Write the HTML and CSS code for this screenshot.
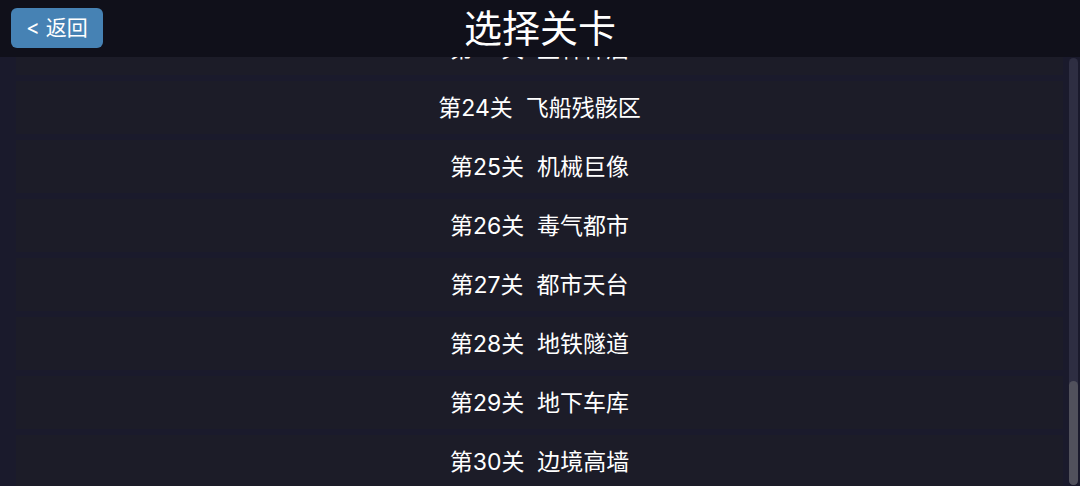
FILE: index.html
```html
<!DOCTYPE html>
<html lang="zh-CN">
<head>
<meta charset="utf-8">
<meta name="viewport" content="width=device-width, initial-scale=1">
<title>选择关卡</title>
<link rel="stylesheet" href="styles.css">
</head>
<body>
<header class="topbar">
  <button class="back" type="button">&lt; 返回</button>
  <h1 class="title">选择关卡</h1>
</header>
<main class="viewport">
  <div class="levels">
    <button class="level" type="button">第23关&nbsp;&nbsp;丛林神庙</button>
    <button class="level" type="button">第24关&nbsp;&nbsp;飞船残骸区</button>
    <button class="level" type="button">第25关&nbsp;&nbsp;机械巨像</button>
    <button class="level" type="button">第26关&nbsp;&nbsp;毒气都市</button>
    <button class="level" type="button">第27关&nbsp;&nbsp;都市天台</button>
    <button class="level" type="button">第28关&nbsp;&nbsp;地铁隧道</button>
    <button class="level" type="button">第29关&nbsp;&nbsp;地下车库</button>
    <button class="level" type="button">第30关&nbsp;&nbsp;边境高墙</button>
  </div>
  <div class="track"><div class="thumb"></div></div>
</main>
</body>
</html>
```
FILE: styles.css
```css
* { box-sizing: border-box; }

body {
  margin: 0;
  height: 100vh;
  display: flex;
  flex-direction: column;
  overflow: hidden;
  background: #1a1a2c;
  color: #fff;
  font-family: Inter, "Noto Sans CJK SC", sans-serif;
}

button {
  border: 0;
  color: inherit;
  font-family: inherit;
}

.topbar {
  flex: none;
  display: grid;
  grid-template-columns: 1fr auto 1fr;
  align-items: center;
  height: 57px;
  padding: 0 11px 2px;
  background: #10101a;
}

.back {
  justify-self: start;
  height: 40px;
  padding: 0 15px;
  border-radius: 6px;
  background: #4682b4;
  font-size: 21px;
  line-height: 40px;
}

.title {
  margin: 0;
  font-size: 38px;
  font-weight: 400;
  line-height: 54px;
}

.viewport {
  flex: 1;
  min-height: 0;
  display: flex;
}

.levels {
  flex: 1;
  display: flex;
  flex-direction: column;
  justify-content: flex-end;
  gap: 6px;
  padding-left: 16px;
  overflow: hidden;
}

.level {
  flex: none;
  height: 53px;
  padding: 2px 0 0;
  background: #1c1c28;
  font-size: 23px;
  line-height: 51px;
}

.level:last-child {
  margin-bottom: -2px;
}

.track {
  flex: none;
  display: flex;
  flex-direction: column;
  justify-content: flex-end;
  width: 9px;
  margin: 1px 2px 1px 6px;
  border-radius: 5px;
  background: #2e2e42;
}

.thumb {
  height: 24.4%;
  border-radius: 5px;
  background: #51515c;
}
```
